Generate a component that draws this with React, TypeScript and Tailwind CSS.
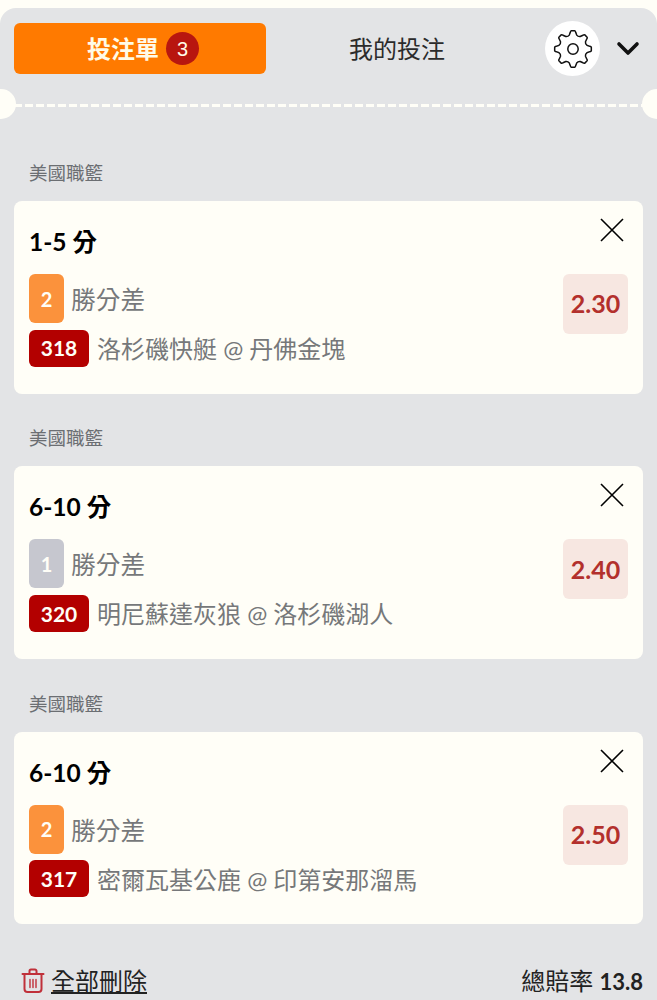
type Bet = {
  score: string;
  rank: string;
  rankColor: string;
  code: string;
  teams: string;
  odds: string;
};

const bets: Bet[] = [
  { score: "1-5 分", rank: "2", rankColor: "bg-[#fb923c]", code: "318", teams: "洛杉磯快艇 @ 丹佛金塊", odds: "2.30" },
  { score: "6-10 分", rank: "1", rankColor: "bg-[#c6c7cf]", code: "320", teams: "明尼蘇達灰狼 @ 洛杉磯湖人", odds: "2.40" },
  { score: "6-10 分", rank: "2", rankColor: "bg-[#fb923c]", code: "317", teams: "密爾瓦基公鹿 @ 印第安那溜馬", odds: "2.50" },
];

// 8 tooth cog outline, first tooth pointing straight up
const gearPath = () => {
  const point = (r: number, deg: number) => {
    const a = ((deg - 90) * Math.PI) / 180;
    return `${(20 + r * Math.cos(a)).toFixed(2)} ${(20 + r * Math.sin(a)).toFixed(2)}`;
  };
  let d = `M${point(17, -9)}`;
  for (let i = 0; i < 8; i++) {
    const c = i * 45;
    d += ` Q${point(18.4, -8 + c)} ${point(18.4, -5 + c)} L${point(18.4, c + 5)} Q${point(18.4, c + 8)} ${point(17, c + 9)}`;
    d += ` L${point(14.4, c + 15)} Q${point(13.2, c + 22.5)} ${point(14.4, c + 30)} L${point(17, c + 36)}`;
  }
  return d + "Z";
};

const GearIcon = () => (
  <svg width="40" height="40" viewBox="0 0 40 40" fill="none" stroke="#111" strokeWidth="1.5" strokeLinejoin="round">
    <path d={gearPath()} />
    <circle cx="20" cy="20" r="5.2" />
  </svg>
);

const BetCard = ({ bet }: { bet: Bet }) => {
  return (
    <div>
      <div className="h-[28px] pl-[15px] text-[18.5px] leading-[28px] text-[#6b6e72]">美國職籃</div>
      <div className="mt-[14px] flex h-[192.5px] rounded-[8px] bg-[#fffef7] px-[15px]">
        <div className="flex-1">
          <div className="mt-[23px] h-[36px] text-[24.5px] font-bold leading-[36px] text-black">{bet.score}</div>
          <div className="mt-[14px] flex items-center">
            <div
              className={`flex h-[49px] w-[35px] items-center justify-center rounded-[6px] text-[20px] font-bold text-[#fffef7] ${bet.rankColor}`}
            >
              {bet.rank}
            </div>
            <span className="ml-[7px] mt-[3px] text-[24.7px] leading-[36px] text-[#76787a]">勝分差</span>
          </div>
          <div className="mt-[6px] flex items-center">
            <div className="flex h-[37px] w-[60px] items-center justify-center rounded-[6px] bg-[#b30000] text-[21px] font-bold text-[#fffef7]">
              {bet.code}
            </div>
            <span className="ml-[8px] mt-[2px] text-[24px] leading-[36px] text-[#76787a]">{bet.teams}</span>
          </div>
        </div>
        <div className="flex w-[66px] flex-col items-end">
          <svg width="24" height="24" viewBox="0 0 24 24" className="mr-[4px] mt-[17px]" fill="none" stroke="#000" strokeWidth="1.6">
            <path d="M1 1l22 22M23 1L1 23" />
          </svg>
          <div className="mt-[32px] flex h-[60px] w-[65px] items-center justify-center rounded-[6px] bg-[#f7e7e1] text-[25px] font-bold text-[#b3302c]">
            {bet.odds}
          </div>
        </div>
      </div>
    </div>
  );
};

const App = () => {
  return (
    <div className="h-[1000px] overflow-hidden bg-[#fffef7] pt-[8px] font-['Lato','Noto_Sans_CJK_TC',sans-serif]">
      <div className="relative h-[992px] rounded-t-[16px] bg-[#e3e4e6] px-[14px]">
        <div className="flex h-[96px] items-start pt-[15px]">
          <div className="flex h-[51px] w-[252px] items-center justify-center rounded-[6px] bg-[#ff7a00] pl-[6px] text-[24px] font-bold text-[#fffbe8]">
            投注單
            <span className="ml-[7px] flex h-[33px] w-[33px] items-center justify-center rounded-full bg-[#b8160f] font-['Liberation_Sans',sans-serif] text-[20px] font-normal text-[#fffbe8]">
              3
            </span>
          </div>
          <div className="flex h-[51px] w-[279px] items-center justify-center pr-[17px] text-[24px] text-[#2b2b2b]">我的投注</div>
          <div className="mt-[-2px] flex h-[55px] w-[55px] items-center justify-center rounded-full bg-white">
            <GearIcon />
          </div>
          <svg width="24" height="16" viewBox="0 0 24 16" fill="none" stroke="#111" strokeWidth="3.6" strokeLinecap="round" strokeLinejoin="round" className="ml-[16px] mt-[18px]">
            <path d="M3 3l9 9 9-9" />
          </svg>
        </div>
        <div className="h-[3px] bg-[repeating-linear-gradient(90deg,#fffef7_0,#fffef7_8px,transparent_8px,transparent_11px)]" />
        <div className="absolute left-[-14px] top-[81px] h-[30px] w-[30px] rounded-full bg-[#fffef7]" />
        <div className="absolute right-[-15px] top-[81px] h-[30px] w-[30px] rounded-full bg-[#fffef7]" />
        <div className="mt-[52px] flex flex-col gap-[30.8px]">
          {bets.map((bet) => (
            <BetCard key={bet.code} bet={bet} />
          ))}
        </div>
        <div className="mt-[39px] flex items-center justify-between">
          <div className="flex items-center pl-[7px]">
            <svg width="24" height="26" viewBox="0 0 24 26" fill="none" stroke="#c0303a" strokeWidth="2" strokeLinecap="round" strokeLinejoin="round">
              <path d="M1.5 6h21" />
              <path d="M8.5 6V3a1.5 1.5 0 0 1 1.5-1.5h4A1.5 1.5 0 0 1 15.500 3v3" />
              <path d="M3.500 6v15a3 3 0 0 0 3 3h11a3 3 0 0 0 3-3V6" />
              <path d="M9 11.500v8M12 11.500v8M15 11.500v8" strokeWidth="1.4" />
            </svg>
            <span className="ml-[6px] text-[24px] text-[#222] underline decoration-2 underline-offset-2">全部刪除</span>
          </div>
          <div className="text-[24px] text-[#222]">
            總賠率 <span className="text-[22px] font-bold">13.8</span>
          </div>
        </div>
      </div>
    </div>
  );
};

export default App;
